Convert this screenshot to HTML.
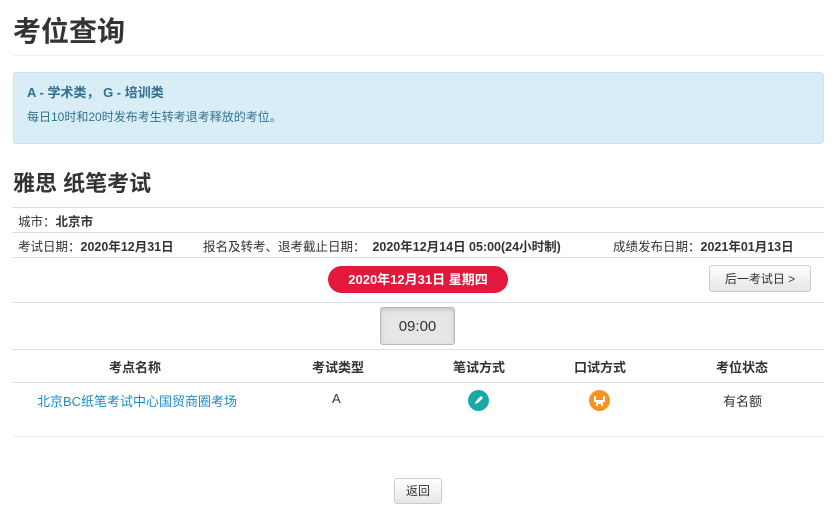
<!DOCTYPE html>
<html><head><meta charset="utf-8"><style>
body{margin:0;width:833px;height:515px;background:#fff;font-family:"Liberation Sans","Noto Sans CJK SC",sans-serif;color:#333;position:relative;overflow:hidden}
.a{position:absolute;white-space:nowrap}
.l{position:absolute;left:13px;width:811px;height:1px;background:#ddd}
b{font-weight:bold}
</style></head><body>
<div class="a" style="left:13px;top:10px;font-size:28px;font-weight:bold;color:#333">考位查询</div>
<div class="l" style="top:55px;background:#eee"></div>
<div class="a" style="left:13px;top:72px;width:809px;height:70px;background:#d9edf7;border:1px solid #bce8f1;border-radius:3px"></div>
<div class="a" style="left:27px;top:82px;font-size:13px;font-weight:bold;color:#31708f">A - 学术类， G - 培训类</div>
<div class="a" style="left:27px;top:108px;font-size:12px;color:#31708f">每日10时和20时发布考生转考退考释放的考位。</div>
<div class="a" style="left:13px;top:166px;font-size:22px;font-weight:bold;color:#333">雅思 纸笔考试</div>
<div class="l" style="top:207px"></div>
<div class="a" style="left:18px;top:211px;font-size:12.5px">城市：<b>北京市</b></div>
<div class="l" style="top:232px"></div>
<div class="a" style="left:18px;top:236px;font-size:12.5px">考试日期：<b>2020年12月31日</b></div>
<div class="a" style="left:203px;top:236px;font-size:12.5px">报名及转考、退考截止日期：&nbsp;&nbsp;<b>2020年12月14日 05:00(24小时制)</b></div>
<div class="a" style="left:613px;top:236px;font-size:12.5px">成绩发布日期：<b>2021年01月13日</b></div>
<div class="l" style="top:257px"></div>
<div class="a" style="left:328px;top:266px;width:180px;height:27px;border-radius:14px;background:#e4173c;color:#fff;font-size:13px;font-weight:bold;text-align:center;line-height:27px">2020年12月31日 星期四</div>
<div class="a" style="left:709px;top:265px;width:102px;height:27px;border:1px solid #ccc;border-radius:3px;background:linear-gradient(#fff,#e6e6e6);font-size:12px;text-align:center;line-height:27px;box-sizing:border-box">后一考试日 &gt;</div>
<div class="l" style="top:302px"></div>
<div class="a" style="left:380px;top:307px;width:75px;height:38px;border:1px solid #bbb;border-radius:3px;background:#e6e6e6;box-shadow:inset 0 2px 4px rgba(0,0,0,.15);font-size:15px;text-align:center;line-height:38px;box-sizing:border-box">09:00</div>
<div class="l" style="top:349px"></div>
<div class="a" style="left:109px;top:357px;font-size:13px;font-weight:bold">考点名称</div>
<div class="a" style="left:312px;top:357px;font-size:13px;font-weight:bold">考试类型</div>
<div class="a" style="left:453px;top:357px;font-size:13px;font-weight:bold">笔试方式</div>
<div class="a" style="left:574px;top:357px;font-size:13px;font-weight:bold">口试方式</div>
<div class="a" style="left:716px;top:357px;font-size:13px;font-weight:bold">考位状态</div>
<div class="l" style="top:382px"></div>
<div class="a" style="left:37px;top:391px;font-size:13px;color:#1a8dc8">北京BC纸笔考试中心国贸商圈考场</div>
<div class="a" style="left:332px;top:391px;font-size:13px">A</div>
<svg class="a" style="left:468px;top:390px" width="21" height="21" viewBox="0 0 21 21"><circle cx="10.5" cy="10.5" r="10.5" fill="#17a9a6"/><path d="M7 14l1-3 5-5 2 2-5 5z" fill="#fff"/></svg>
<svg class="a" style="left:589px;top:390px" width="21" height="21" viewBox="0 0 21 21"><circle cx="10.5" cy="10.5" r="10.5" fill="#f7931e"/><path d="M6 6v5h9V6M8 11v5M13 11v5M8 13h5" stroke="#fff" stroke-width="2" fill="none"/></svg>
<div class="a" style="left:723px;top:391px;font-size:13px">有名额</div>
<div class="l" style="top:436px;background:#eee"></div>
<div class="a" style="left:394px;top:478px;width:48px;height:26px;border:1px solid #ccc;border-radius:3px;background:linear-gradient(#fff,#e6e6e6);font-size:12px;text-align:center;line-height:24px;box-sizing:border-box">返回</div>
</body></html>
